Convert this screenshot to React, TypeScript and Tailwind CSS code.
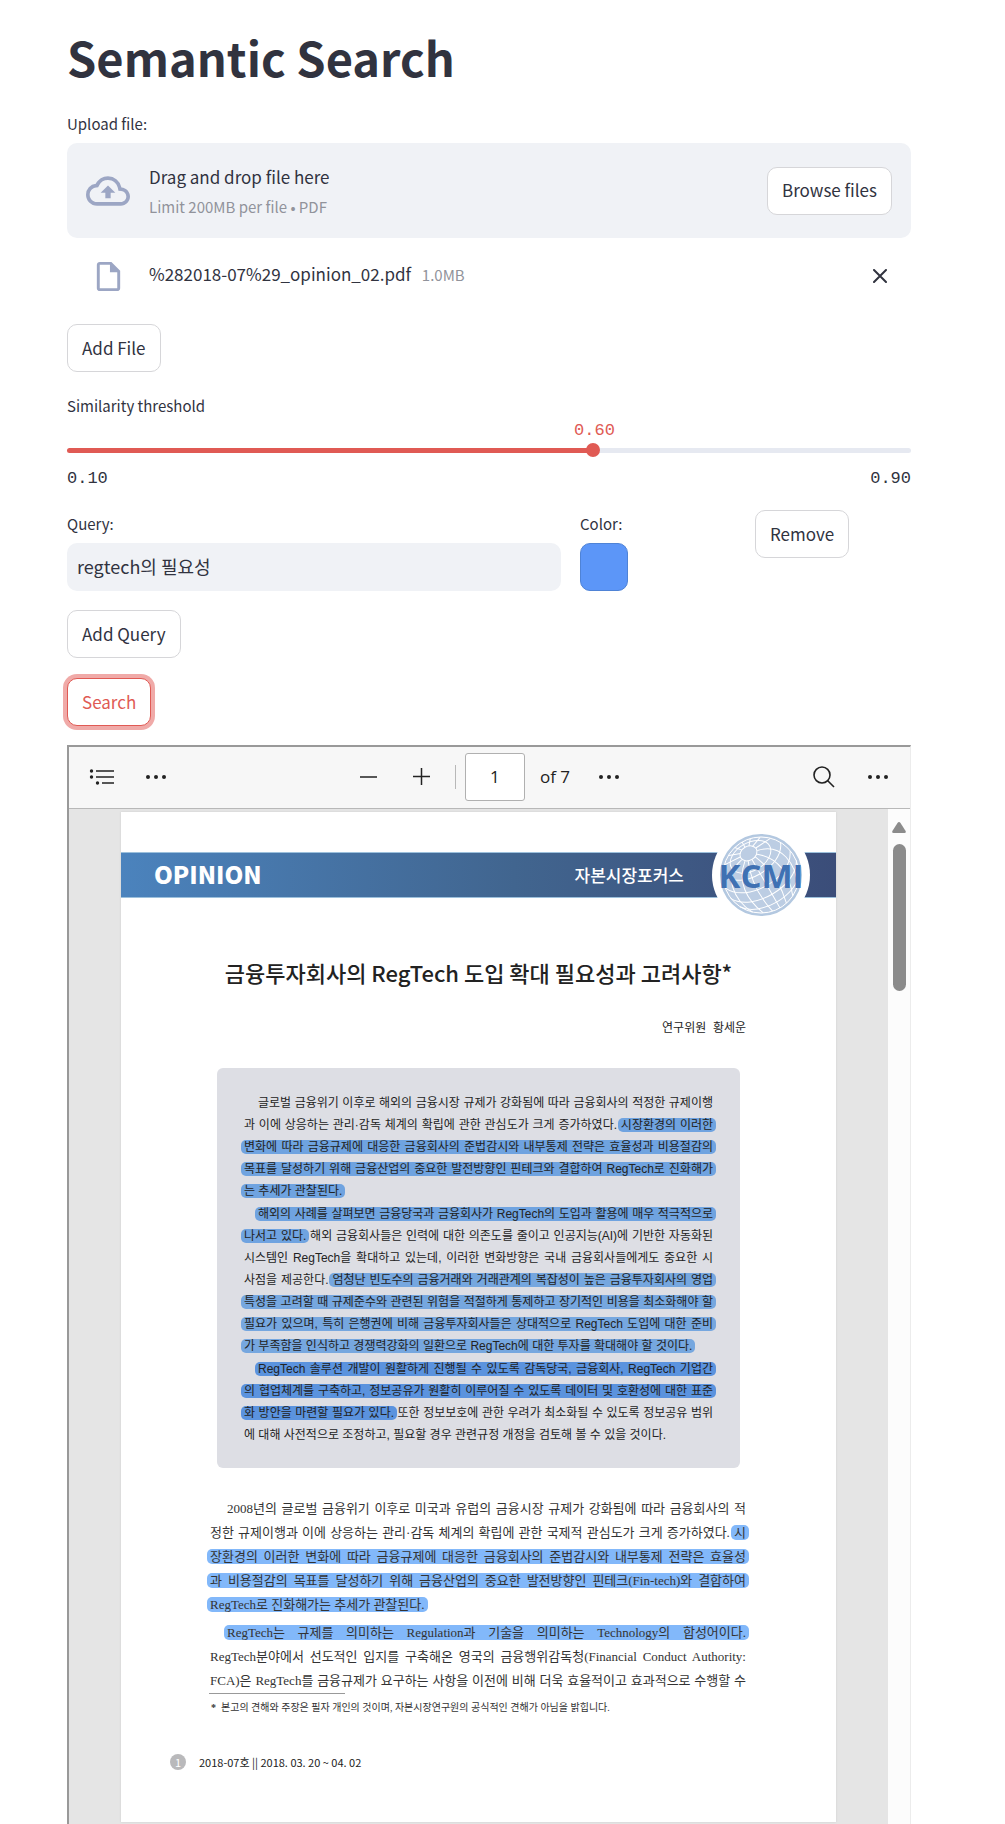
import { useRef, useState } from "react";
import type { CSSProperties, ReactNode } from "react";
import { MdOutlineCloudUpload, MdOutlineInsertDriveFile } from "react-icons/md";

const BUTTON =
  "flex h-12 items-center justify-center rounded-[10px] border bg-white px-[14px] pb-[2px] text-[17px] leading-none whitespace-nowrap";

function OutlineButton({ children, onClick }: { children: ReactNode; onClick?: () => void }) {
  return (
    <button type="button" onClick={onClick} className={`${BUTTON} border-[#d6d6d9] text-[#31333f]`}>
      {children}
    </button>
  );
}

type Tone = "sky" | "blue" | "deep" | "paper";
type Segment = string | { mark: string; tone: Tone };

const TONES: Record<Tone, string> = {
  sky: "bg-[#6fa3e0]",
  blue: "bg-[#76a7df]",
  deep: "bg-[#5b93de]",
  paper: "bg-[#82b8fa]",
};

type Paragraph = { lines: Segment[][]; open?: boolean };

const m = (tone: Tone, mark: string): Segment => ({ mark, tone });

const SUMMARY: Paragraph[] = [
  {
    lines: [
      ["글로벌 금융위기 이후로 해외의 금융시장 규제가 강화됨에 따라 금융회사의 적정한 규제이행"],
      ["과 이에 상응하는 관리·감독 체계의 확립에 관한 관심도가 크게 증가하였다. ", m("sky", "시장환경의 이러한")],
      [m("sky", "변화에 따라 금융규제에 대응한 금융회사의 준법감시와 내부통제 전략은 효율성과 비용절감의")],
      [m("sky", "목표를 달성하기 위해 금융산업의 중요한 발전방향인 핀테크와 결합하여 RegTech로 진화해가")],
      [m("sky", "는 추세가 관찰된다.")],
    ],
  },
  {
    lines: [
      [m("sky", "해외의 사례를 살펴보면 금융당국과 금융회사가 RegTech의 도입과 활용에 매우 적극적으로")],
      [m("sky", "나서고 있다."), " 해외 금융회사들은 인력에 대한 의존도를 줄이고 인공지능(AI)에 기반한 자동화된"],
      ["시스템인 RegTech을 확대하고 있는데, 이러한 변화방향은 국내 금융회사들에게도 중요한 시"],
      ["사점을 제공한다. ", m("blue", "엄청난 빈도수의 금융거래와 거래관계의 복잡성이 높은 금융투자회사의 영업")],
      [m("blue", "특성을 고려할 때 규제준수와 관련된 위험을 적절하게 통제하고 장기적인 비용을 최소화해야 할")],
      [m("blue", "필요가 있으며, 특히 은행권에 비해 금융투자회사들은 상대적으로 RegTech 도입에 대한 준비")],
      [m("blue", "가 부족함을 인식하고 경쟁력강화의 일환으로 RegTech에 대한 투자를 확대해야 할 것이다.")],
    ],
  },
  {
    lines: [
      [m("deep", "RegTech 솔루션 개발이 원활하게 진행될 수 있도록 감독당국, 금융회사, RegTech 기업간")],
      [m("deep", "의 협업체계를 구축하고, 정보공유가 원활히 이루어질 수 있도록 데이터 및 호환성에 대한 표준")],
      [m("deep", "화 방안을 마련할 필요가 있다."), " 또한 정보보호에 관한 우려가 최소화될 수 있도록 정보공유 범위"],
      ["에 대해 사전적으로 조정하고, 필요할 경우 관련규정 개정을 검토해 볼 수 있을 것이다."],
    ],
  },
];

const BODY: Paragraph[] = [
  {
    lines: [
      ["2008년의 글로벌 금융위기 이후로 미국과 유럽의 금융시장 규제가 강화됨에 따라 금융회사의 적"],
      ["정한 규제이행과 이에 상응하는 관리·감독 체계의 확립에 관한 국제적 관심도가 크게 증가하였다. ", m("paper", "시")],
      [m("paper", "장환경의 이러한 변화에 따라 금융규제에 대응한 금융회사의 준법감시와 내부통제 전략은 효율성")],
      [m("paper", "과 비용절감의 목표를 달성하기 위해 금융산업의 중요한 발전방향인 핀테크(Fin-tech)와 결합하여")],
      [m("paper", "RegTech로 진화해가는 추세가 관찰된다.")],
    ],
  },
  {
    open: true,
    lines: [
      [m("paper", "RegTech는 규제를 의미하는 Regulation과 기술을 의미하는 Technology의 합성어이다.")],
      ["RegTech분야에서 선도적인 입지를 구축해온 영국의 금융행위감독청(Financial Conduct Authority:"],
      ["FCA)은 RegTech를 금융규제가 요구하는 사항을 이전에 비해 더욱 효율적이고 효과적으로 수행할 수"],
    ],
  },
];

function Lines({ paragraph, indent }: { paragraph: Paragraph; indent: string }) {
  const last = paragraph.lines.length - 1;
  return (
    <p>
      {paragraph.lines.map((segments, i) => (
        <span
          key={i}
          className={`block whitespace-nowrap ${i === 0 ? indent : ""} ${
            i < last || paragraph.open ? "[text-align-last:justify]" : ""
          }`}
        >
          {segments.map((s, j) =>
            typeof s === "string" ? (
              s
            ) : (
              <mark key={j} className={`-mx-[3px] rounded-[5px] px-[3px] text-inherit ${TONES[s.tone]}`}>
                {s.mark}
              </mark>
            ),
          )}
        </span>
      ))}
    </p>
  );
}

function Dots() {
  return (
    <svg width="22" height="6" viewBox="0 0 22 6" fill="#222" aria-hidden="true">
      <circle cx="3" cy="3" r="2" />
      <circle cx="11" cy="3" r="2" />
      <circle cx="19" cy="3" r="2" />
    </svg>
  );
}

function Globe() {
  return (
    <svg width="100" height="100" viewBox="-50 -50 100 100" fill="none" aria-hidden="true">
      <circle r="49" fill="#fff" />
      <circle r="40" fill="#bccde3" stroke="#b3c8e0" strokeWidth="2" />
      <circle r="38" stroke="#fff" strokeWidth="1" />
      <g stroke="#fff" strokeWidth="1" transform="rotate(-30)">
        <ellipse cx="0" cy="-25" rx="9" ry="7" />
        <ellipse cx="0" cy="-21" rx="22" ry="14" />
        <path d="M-33 -18C-24 4 24 4 33 -18M-37 -6C-26 18 26 18 37 -6M-38 5C-26 28 26 28 38 5M-34 17C-22 36 22 36 34 17" />
        <path d="M0 -18V38M-4 -19C-12 0-12 20-8 37M4 -19C12 0 12 20 8 37M-7 -20C-24-6-25 14-17 34M7 -20C24-6 25 14 17 34M-9 -23C-34-18-36 8-26 28M9 -23C34-18 36 8 26 28M0 -32V-38M-4 -31L-9 -37M4 -31L9 -37M-7 -29L-18 -33M7 -29L18 -33M-9 -26L-26 -27M9 -26L26 -27" />
      </g>
    </svg>
  );
}

function PdfToolbar() {
  return (
    <div className="flex h-[62px] items-center justify-between border-b border-[#b8b8b8] bg-[#f7f7f7] pr-[21px] pb-[2px] pl-[20px] font-['Open_Sans',sans-serif] text-[17px] text-[#222]">
      <div className="flex items-center gap-[30px]">
        <button type="button" aria-label="Contents">
          <svg width="26" height="18" viewBox="0 0 26 18" stroke="#222" strokeWidth="1.5" fill="none">
            <path d="M7 3H25M7 9H25M13 15H25" />
            <g fill="#222" stroke="none">
              <circle cx="2.5" cy="3" r="1.7" />
              <circle cx="2.5" cy="9" r="1.7" />
              <circle cx="8.5" cy="15" r="1.7" />
            </g>
          </svg>
        </button>
        <button type="button" aria-label="More tools">
          <Dots />
        </button>
      </div>
      <div className="flex items-center">
        <button type="button" aria-label="Zoom out" className="mr-[36px]">
          <svg width="17" height="17" viewBox="0 0 17 17" stroke="#222" strokeWidth="1.5">
            <path d="M0 9H17" />
          </svg>
        </button>
        <button type="button" aria-label="Zoom in" className="mr-[25px]">
          <svg width="17" height="17" viewBox="0 0 17 17" stroke="#222" strokeWidth="1.5">
            <path d="M0 8.5H17M8.5 0V17" />
          </svg>
        </button>
        <span className="mr-[9px] h-6 w-px bg-[#b8b8b8]" />
        <input
          aria-label="Page number"
          defaultValue="1"
          className="h-12 w-[60px] rounded-[3px] border border-[#b0b0b0] bg-white text-center"
        />
        <span className="mr-[28px] ml-[15px] whitespace-nowrap">of 7</span>
        <button type="button" aria-label="Page options">
          <Dots />
        </button>
      </div>
      <div className="flex items-center gap-[32px]">
        <button type="button" aria-label="Search document">
          <svg width="22" height="22" viewBox="0 0 22 22" stroke="#222" strokeWidth="1.6" fill="none">
            <circle cx="9" cy="9" r="8" />
            <path d="M14.5 14.5L21 21" />
          </svg>
        </button>
        <button type="button" aria-label="More actions">
          <Dots />
        </button>
      </div>
    </div>
  );
}

function PdfPage() {
  return (
    <article className="flex-1 bg-white pb-[50px] text-[#222] shadow-[0_0_2px_#ccc]">
      <header className="relative mt-[40px] flex h-[46px] items-center justify-between border-y border-[#9cc0dc] bg-linear-to-r from-[#4b83bd] via-[#41658f] via-55% to-[#3b4d79] pr-[152px] pb-[2px] pl-[33px] text-white">
        <span className="text-[24px] leading-none font-black">OPINION</span>
        <span className="text-[17px] leading-none font-medium">자본시장포커스</span>
        <div className="absolute top-1/2 right-[25px] flex size-[100px] -translate-y-1/2 items-center justify-center overflow-hidden">
          <div className="absolute inset-0">
            <Globe />
          </div>
          <span className="relative font-['Open_Sans',sans-serif] text-[33px] leading-none font-bold text-[#3f71b3]">
            KCMI
          </span>
        </div>
      </header>

      <h2 className="mt-[58px] text-center text-[22px] leading-[32px] font-medium whitespace-nowrap">
        금융투자회사의 RegTech 도입 확대 필요성과 고려사항*
      </h2>

      <div className="font-['Liberation_Sans','Noto_Sans_CJK_KR',sans-serif]">
        <p className="mt-[29px] mr-[90px] text-right text-[12px] leading-[22px]">연구위원&nbsp; 황세운</p>

        <section className="mx-[96px] mt-[29px] flex flex-col gap-px rounded-[6px] bg-[#dddee4] px-[27px] pt-[24px] pb-[22px] text-[12px] leading-[22px]">
          {SUMMARY.map((p, i) => (
            <Lines key={i} paragraph={p} indent="pl-[14px]" />
          ))}
        </section>
      </div>

      <section className="mt-[29px] mr-[90px] ml-[89px] flex flex-col gap-[4px] font-['Liberation_Serif','Noto_Sans_CJK_KR',serif] text-[13px] leading-[24px] text-[#333]">
        {BODY.map((p, i) => (
          <Lines key={i} paragraph={p} indent="pl-[17px]" />
        ))}
      </section>
      <hr className="ml-[88px] w-[136px] border-[#999]" />
      <p className="mt-[4px] ml-[90px] font-['Liberation_Serif','Noto_Sans_CJK_KR',serif] text-[10px] leading-[20px] text-[#333]">
        <b>*</b>&nbsp; 본고의 견해와 주장은 필자 개인의 것이며, 자본시장연구원의 공식적인 견해가 아님을 밝힙니다.
      </p>

      <footer className="mt-[34px] ml-[49px] flex items-center gap-[13px] text-[11px] leading-[20px]">
        <span className="flex size-4 items-center justify-center rounded-full bg-[#b9b9bb] leading-none text-white">
          1
        </span>
        <span>2018-07호 || 2018. 03. 20 ~ 04. 02</span>
      </footer>
    </article>
  );
}

export default function App() {
  const fileInput = useRef<HTMLInputElement>(null);
  const [threshold, setThreshold] = useState(0.6);
  const [query, setQuery] = useState("regtech의 필요성");
  const [color, setColor] = useState("#5c96f8");
  const percent = ((threshold - 0.1) / 0.8) * 100;

  return (
    <main className="bg-white pt-[25px] pr-[94px] pl-[67px] font-['Noto_Sans_CJK_KR',sans-serif] text-[#31333f]">
      <h1 className="text-[47px] leading-[64px] font-bold">Semantic Search</h1>

      <label htmlFor="upload" className="mt-[23px] block text-[15px] leading-[24px]">
        Upload file:
      </label>
      <input ref={fileInput} id="upload" type="file" accept=".pdf" className="sr-only" tabIndex={-1} />
      <div className="mt-[7px] flex h-[95px] items-center rounded-[10px] bg-[#f0f2f6] px-[19px]">
        <MdOutlineCloudUpload className="size-[44px] text-[#9ca6c4]" />
        <div className="ml-[19px] flex-1 pt-[3px]">
          <p className="text-[17px] leading-[30px]">Drag and drop file here</p>
          <p className="text-[15px] leading-[30px] text-[#91939b]">Limit 200MB per file • PDF</p>
        </div>
        <OutlineButton onClick={() => fileInput.current?.click()}>Browse files</OutlineButton>
      </div>

      <div className="flex h-[76px] items-center pl-[24px]">
        <MdOutlineInsertDriveFile className="size-[35px] text-[#9ca6c4]" />
        <p className="ml-[23px] flex-1 pb-[3px] text-[17px] leading-[30px]">
          %282018-07%29_opinion_02.pdf <span className="ml-[7px] text-[15px] text-[#91939b]">1.0MB</span>
        </p>
        <button type="button" aria-label="Remove file" className="mr-[24px]">
          <svg width="14" height="14" viewBox="0 0 14 14" stroke="#31333f" strokeWidth="2" strokeLinecap="round">
            <path d="M1 1L13 13M13 1L1 13" />
          </svg>
        </button>
      </div>

      <div className="mt-[10px] flex">
        <OutlineButton>Add File</OutlineButton>
      </div>

      <label htmlFor="threshold" className="mt-[22px] block text-[15px] leading-[24px]">
        Similarity threshold
      </label>
      <div className="relative pt-[25px] font-['Liberation_Mono',monospace] text-[17px]">
        <output
          htmlFor="threshold"
          className="absolute top-px -translate-x-1/2 leading-[24px] text-[#e05a54]"
          style={{ left: `${percent}%` }}
        >
          {threshold.toFixed(2)}
        </output>
        <input
          id="threshold"
          type="range"
          min={0.1}
          max={0.9}
          step={0.05}
          value={threshold}
          onChange={(e) => setThreshold(Number(e.target.value))}
          className="block h-[14px] w-full appearance-none bg-transparent [&::-webkit-slider-runnable-track]:h-[5px] [&::-webkit-slider-runnable-track]:rounded-full [&::-webkit-slider-runnable-track]:bg-[image:var(--track)] [&::-webkit-slider-thumb]:-mt-[5px] [&::-webkit-slider-thumb]:size-[14px] [&::-webkit-slider-thumb]:appearance-none [&::-webkit-slider-thumb]:rounded-full [&::-webkit-slider-thumb]:bg-[#e05a54]"
          style={
            {
              "--track": `linear-gradient(to right, #e05a54 ${percent}%, #e6e9f1 ${percent}%)`,
            } as CSSProperties
          }
        />
        <div className="mt-[10px] flex justify-between leading-[24px]">
          <span>0.10</span>
          <span>0.90</span>
        </div>
      </div>

      <div className="mt-[19px] grid grid-cols-[494fr_156fr_156fr] gap-[19px]">
        <div className="pt-[2px]">
          <label htmlFor="query" className="block text-[15px] leading-[24px]">
            Query:
          </label>
          <input
            id="query"
            value={query}
            onChange={(e) => setQuery(e.target.value)}
            className="mt-[7px] block h-12 w-full rounded-[10px] bg-[#f0f2f6] px-[10px] pb-[2px] text-[18px]"
          />
        </div>
        <div className="pt-[2px]">
          <label htmlFor="color" className="block text-[15px] leading-[24px]">
            Color:
          </label>
          <input
            id="color"
            type="color"
            value={color}
            onChange={(e) => setColor(e.target.value)}
            className="mt-[7px] block size-12 appearance-none bg-transparent [&::-webkit-color-swatch]:rounded-[10px] [&::-webkit-color-swatch]:border [&::-webkit-color-swatch]:border-[#4f83d6] [&::-webkit-color-swatch-wrapper]:p-0"
          />
        </div>
        <div className="flex items-start">
          <OutlineButton>Remove</OutlineButton>
        </div>
      </div>

      <div className="mt-[19px] flex">
        <OutlineButton>Add Query</OutlineButton>
      </div>
      <div className="mt-[20px] flex">
        <button type="button" className={`${BUTTON} border-[#e05a54] text-[#e05a54] ring-4 ring-[#f0aaa8]`}>
          Search
        </button>
      </div>

      <section
        aria-label="Document viewer"
        className="mt-[19px] border-t-2 border-r border-l-2 border-t-[#999] border-r-[#ececec] border-l-[#999]"
      >
        <PdfToolbar />
        <div className="flex bg-[#e5e5e5]">
          <div className="flex flex-1 px-[52px] pt-[3px] pb-[2px]">
            <PdfPage />
          </div>
          <div className="flex w-[22px] flex-col items-center bg-[#fcfcfc] pt-[13px]">
            <svg width="14" height="12" viewBox="0 0 14 12" fill="#8b8b8b" aria-hidden="true">
              <path d="M5.5 1Q7 -.8 8.5 1L13.6 9Q14.3 11 12.5 11H1.5Q-.3 11 .4 9Z" />
            </svg>
            <span className="mt-[10px] h-[147px] w-[13px] rounded-full bg-[#8b8b8b]" />
          </div>
        </div>
      </section>
    </main>
  );
}
